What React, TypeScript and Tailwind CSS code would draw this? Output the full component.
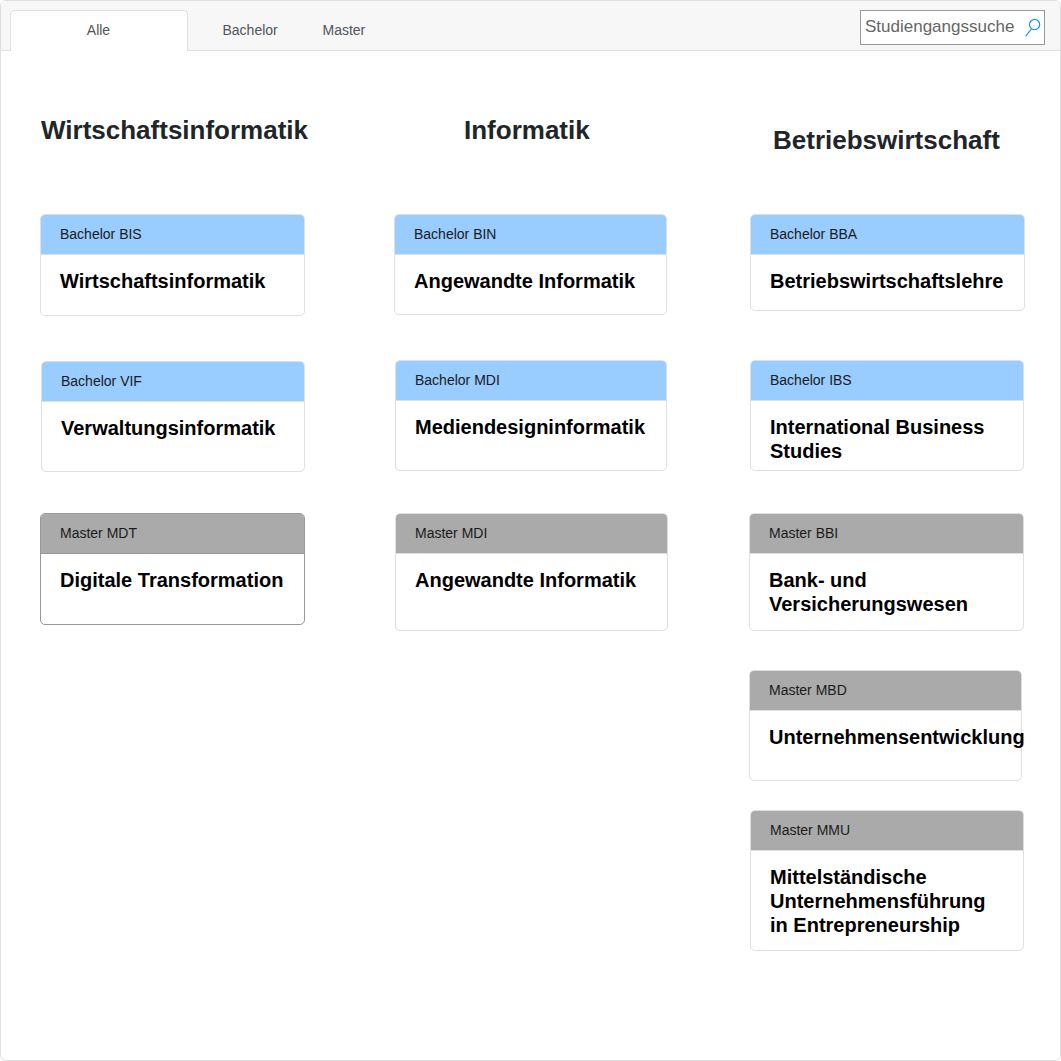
import React from "react";

type Program = {
  code: string;
  title: string;
  kind: "bachelor" | "master";
  box: string;
  active?: boolean;
};

type Column = { heading: string; headingBox: string; box: string; programs: Program[] };

const columns: Column[] = [
  {
    heading: "Wirtschaftsinformatik",
    headingBox: "ml-px pt-[64px]",
    box: "w-[354px]",
    programs: [
      { code: "Bachelor BIS", title: "Wirtschaftsinformatik", kind: "bachelor", box: "h-[102px] w-[265px]" },
      { code: "Bachelor VIF", title: "Verwaltungsinformatik", kind: "bachelor", box: "mt-[45px] ml-px h-[111px] w-[264px]" },
      { code: "Master MDT", title: "Digitale Transformation", kind: "master", box: "mt-[41px] h-[112px] w-[265px]", active: true },
    ],
  },
  {
    heading: "Informatik",
    headingBox: "ml-[70px] pt-[64px]",
    box: "w-[355px]",
    programs: [
      { code: "Bachelor BIN", title: "Angewandte Informatik", kind: "bachelor", box: "h-[101px] w-[273px]" },
      { code: "Bachelor MDI", title: "Mediendesigninformatik", kind: "bachelor", box: "mt-[45px] ml-px h-[111px] w-[272px]" },
      { code: "Master MDI", title: "Angewandte Informatik", kind: "master", box: "mt-[42px] ml-px h-[118px] w-[273px]" },
    ],
  },
  {
    heading: "Betriebswirtschaft",
    headingBox: "ml-6 pt-[74px]",
    box: "w-[276px]",
    programs: [
      { code: "Bachelor BBA", title: "Betriebswirtschaftslehre", kind: "bachelor", box: "ml-px h-[97px] w-[275px]" },
      { code: "Bachelor IBS", title: "International Business Studies", kind: "bachelor", box: "mt-[49px] ml-px h-[111px] w-[274px]" },
      { code: "Master BBI", title: "Bank- und Versicherungswesen", kind: "master", box: "mt-[42px] h-[118px] w-[275px]" },
      { code: "Master MBD", title: "Unternehmensentwicklung", kind: "master", box: "mt-[39px] h-[111px] w-[273px]" },
      { code: "Master MMU", title: "Mittelständische Unternehmensführung in Entrepreneurship", kind: "master", box: "mt-[29px] ml-px h-[141px] w-[274px]" },
    ],
  },
];

function Card({ code, title, kind, box, active }: Program) {
  const border = active ? "border-[#999999]" : "border-[#dfdfdf]";
  const fill = kind === "bachelor" ? "bg-[#99ccff]" : "bg-[#aaaaaa]";
  return (
    <article className={`shrink-0 rounded-[5px] border bg-white ${border} ${box}`}>
      <div className={`flex h-10 items-center rounded-t-[4px] border-b pb-[2px] pl-[19px] text-[14px] leading-4 text-[#1a1a1a] ${border} ${fill}`}>
        {code}
      </div>
      <h3 className="mt-[14px] ml-[19px] w-[236px] text-[20px] leading-6 font-bold text-black">{title}</h3>
    </article>
  );
}

export default function App() {
  return (
    <div className="flex h-[1061px] w-[1061px] flex-col overflow-hidden rounded-[6px] border border-[#dfdfdf] bg-white font-['Liberation_Sans',Arial,sans-serif]">
      <header className="flex h-[50px] shrink-0 border-b border-[#dfdfdf] bg-[#f7f7f7] pl-[9px] text-[14px] leading-4 text-[#505559]">
        <div className="mt-[9px] flex h-[41px] w-[178px] items-center justify-center rounded-t-[5px] border border-b-0 border-[#dfdfdf] bg-white pr-px pb-[2px]">
          Alle
        </div>
        <nav className="mt-[21px] ml-[34.5px] flex">
          <span className="w-[100px]">Bachelor</span>
          <span>Master</span>
        </nav>
        <div className="mt-[9px] mr-[15px] ml-auto flex h-[35px] w-[185px] border border-[#999999] bg-white pl-[4px]">
          <span className="mt-[6px] text-[17px] leading-5 text-[#666666]">Studiengangssuche</span>
          <svg className="mt-[8px] ml-[11px] shrink-0" width="16" height="19" viewBox="0 0 16 19" fill="none" stroke="#0d8cf0" strokeWidth="1.1">
            <circle cx="9.6" cy="5.6" r="5.1" />
            <path d="M6.5 9.9 0.6 17.3" />
          </svg>
        </div>
      </header>
      <main className="flex flex-1 pl-[39px]">
        {columns.map((c) => (
          <section key={c.heading} className={`flex shrink-0 flex-col ${c.box}`}>
            <h2 className={`h-[163px] text-[26px] leading-[30px] font-bold whitespace-nowrap text-[#212529] ${c.headingBox}`}>
              {c.heading}
            </h2>
            {c.programs.map((p) => (
              <Card key={p.code} {...p} />
            ))}
          </section>
        ))}
      </main>
    </div>
  );
}
